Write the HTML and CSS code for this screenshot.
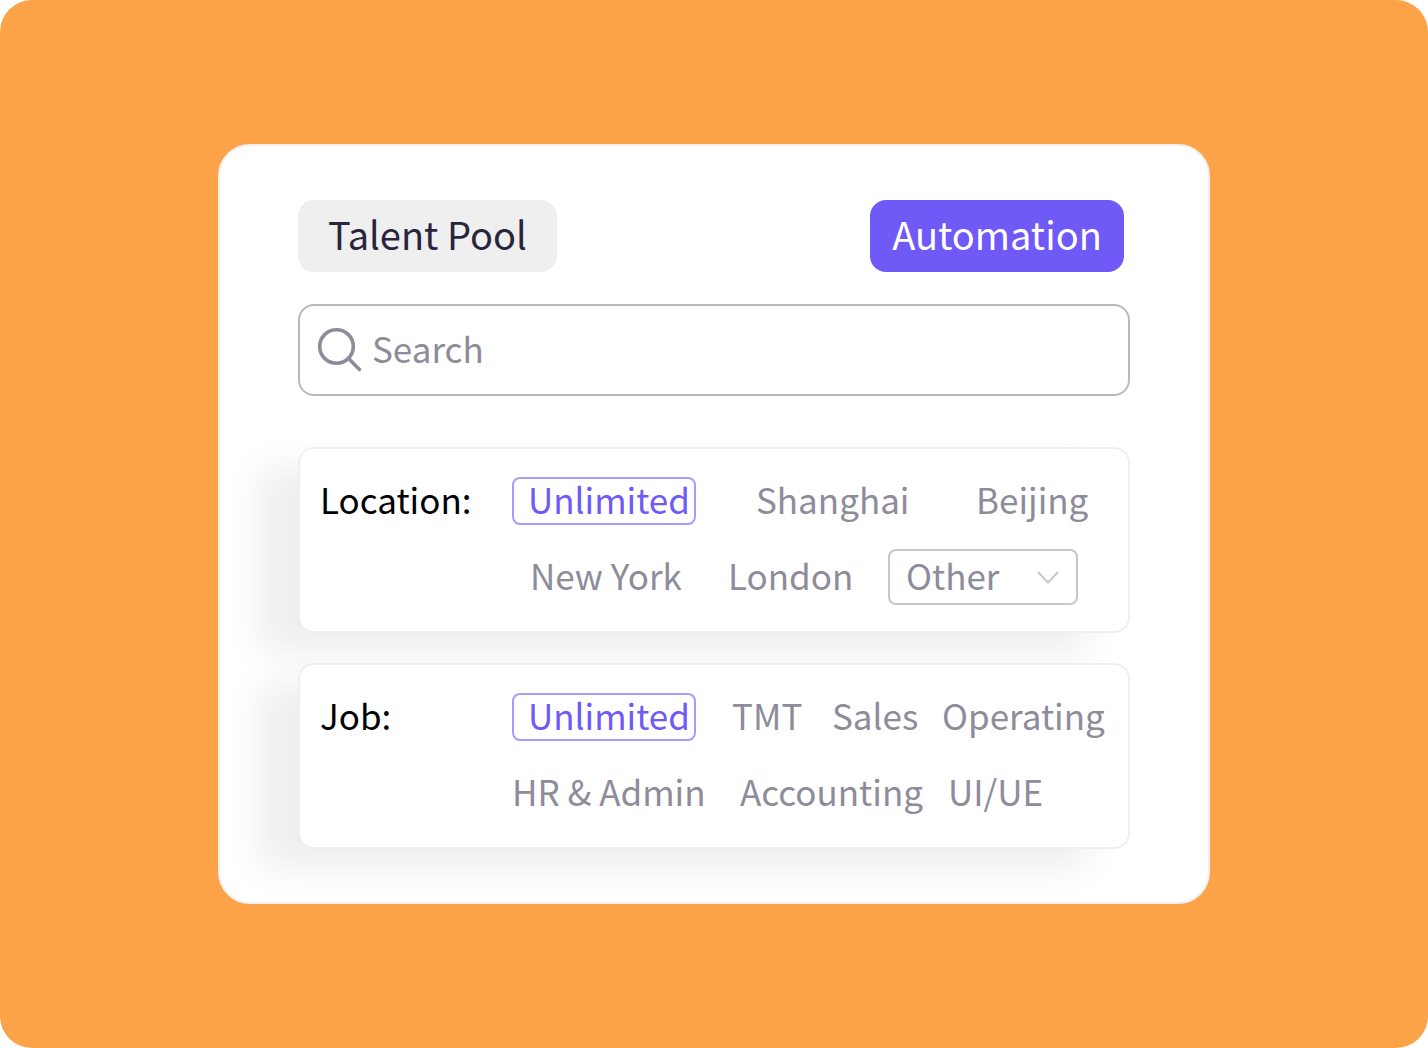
FILE: index.html
```html
<!DOCTYPE html>
<html lang="en">
<head>
    <meta charset="UTF-8">
    <meta name="viewport" content="width=device-width, initial-scale=1.0">
    <title>Talent Pool</title>
    <link rel="stylesheet" href="styles.css">
</head>
<body>
    <main class="page">
        <div class="container">
            <header class="toolbar">
                <button type="button" class="btn">Talent Pool</button>
                <button type="button" class="btn btn-primary">Automation</button>
            </header>

            <form class="search" role="search">
                <label class="search-icon" for="search" aria-label="Search">
                    <svg width="48" height="48" viewBox="0 0 48 48" fill="none" stroke="currentColor" stroke-width="3.6" stroke-linecap="round">
                        <circle cx="20.500" cy="20.500" r="16.800"/>
                        <path d="M32.500 32.500l11 11"/>
                    </svg>
                </label>
                <input type="search" id="search" class="search-input" name="search" placeholder="Search">
            </form>

            <section class="filter" aria-labelledby="location-label">
                <h2 class="filter-label" id="location-label">Location:</h2>
                <div class="filter-rows">
                    <div class="row row-china">
                        <button type="button" class="option selected" aria-pressed="true">Unlimited</button>
                        <button type="button" class="option">Shanghai</button>
                        <button type="button" class="option">Beijing</button>
                    </div>
                    <div class="row row-world">
                        <button type="button" class="option">New York</button>
                        <button type="button" class="option">London</button>
                        <div class="select-wrap">
                            <select class="select" name="location" aria-label="Other location">
                                <option>Other</option>
                            </select>
                            <svg class="chevron" width="24" height="16" viewBox="0 0 24 16" fill="none" stroke="currentColor" stroke-width="2">
                                <path d="M2 3l10 10.500L22 3"/>
                            </svg>
                        </div>
                    </div>
                </div>
            </section>

            <section class="filter" aria-labelledby="job-label">
                <h2 class="filter-label" id="job-label">Job:</h2>
                <div class="filter-rows">
                    <div class="row row-fields">
                        <button type="button" class="option selected" aria-pressed="true">Unlimited</button>
                        <button type="button" class="option">TMT</button>
                        <button type="button" class="option">Sales</button>
                        <button type="button" class="option">Operating</button>
                    </div>
                    <div class="row row-office">
                        <button type="button" class="option">HR &amp; Admin</button>
                        <button type="button" class="option">Accounting</button>
                        <button type="button" class="option">UI/UE</button>
                    </div>
                </div>
            </section>
        </div>
    </main>
</body>
</html>
```
FILE: styles.css
```css
* {
    box-sizing: border-box;
}

body {
    margin: 0;
    background-color: #ffffff;
    font-family: "Noto Sans CJK SC", "Noto Sans", sans-serif;
    font-size: 35px;
    line-height: 40px;
    color: #8e8c9a;
}

button, input, select {
    font: inherit;
    color: inherit;
}

.page {
    display: flex;
    justify-content: center;
    align-items: center;
    min-height: 100vh;
    padding: 32px;
    background-color: #fca34a;
    border-radius: 32px;
}

.container {
    width: 100%;
    max-width: 992px;
    padding: 54px 78px 53px;
    background-color: #ffffff;
    border: 2px solid #efefef;
    border-radius: 32px;
}

/* Top buttons */
.toolbar {
    display: flex;
    justify-content: space-between;
    padding-right: 6px;
    margin-bottom: 32px;
}

.btn {
    min-width: 254px;
    height: 72px;
    padding: 0 30px 4px;
    background-color: #efefef;
    border: none;
    border-radius: 16px;
    font-size: 38px;
    color: #29253d;
    cursor: pointer;
}

.btn-primary {
    padding: 0 20px 4px;
    background-color: #6f5af8;
    color: #ffffff;
}

/* Search box */
.search {
    display: flex;
    align-items: center;
    height: 92px;
    padding: 0 16px;
    margin-bottom: 51px;
    border: 2px solid #b9b8c0;
    border-radius: 16px;
}

.search-icon {
    display: flex;
}

.search-input {
    flex: 1;
    min-width: 0;
    padding: 0 8px 4px;
    background: none;
    border: none;
    outline: none;
}

.search-input::placeholder {
    color: #8e8c9a;
    opacity: 1;
}

/* Filter cards */
.filter {
    display: flex;
    padding: 28px 20px 26px;
    background-color: #ffffff;
    border: 2px solid #efefef;
    border-radius: 16px;
    box-shadow: -40px 20px 36px #efefef;
}

.filter + .filter {
    margin-top: 30px;
}

.filter-label {
    flex: 0 0 192px;
    margin: 0;
    font-size: 35px;
    font-weight: normal;
    line-height: 44px;
    color: #000000;
}

.filter-rows {
    flex: 1;
    display: grid;
    grid-template-rows: 48px 56px;
    gap: 24px;
}

.row {
    display: grid;
    align-items: center;
    justify-content: start;
}

.row-china {
    grid-template-columns: 244px 220px auto;
}

.row-world {
    grid-template-columns: 198px 160px auto;
    padding-left: 18px;
}

.row-fields {
    grid-template-columns: 220px 100px 110px auto;
}

.row-office {
    grid-template-columns: 228px 208px auto;
}

.option {
    height: 48px;
    padding: 0 0 4px;
    background: none;
    border: none;
    text-align: left;
    white-space: nowrap;
    cursor: pointer;
}

.option.selected {
    width: 184px;
    padding-left: 14px;
    border: 2px solid #a99bfb;
    border-radius: 8px;
    color: #6f5af8;
}

.select-wrap {
    position: relative;
    display: flex;
}

.select {
    width: 190px;
    height: 56px;
    padding: 0 48px 4px 16px;
    appearance: none;
    background: none;
    border: 2px solid #c7c6cd;
    border-radius: 8px;
}

.chevron {
    position: absolute;
    top: 20px;
    right: 18px;
    color: #c7c6cd;
    pointer-events: none;
}
```
